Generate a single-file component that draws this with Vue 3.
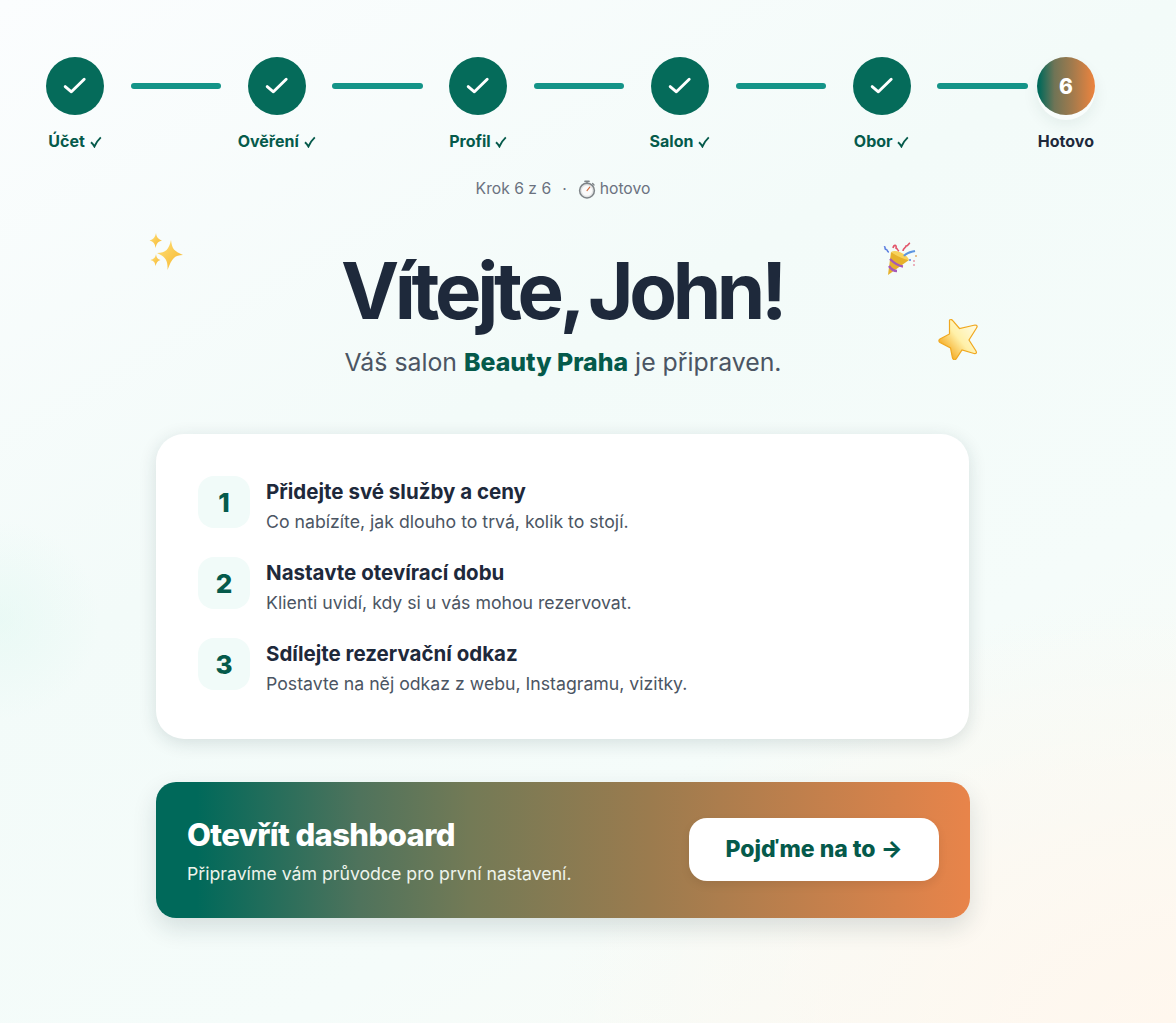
<script setup>
const steps = [
  { label: 'Účet' },
  { label: 'Ověření' },
  { label: 'Profil' },
  { label: 'Salon' },
  { label: 'Obor' },
]
const items = [
  { n: 1, title: 'Přidejte své služby a ceny', text: 'Co nabízíte, jak dlouho to trvá, kolik to stojí.' },
  { n: 2, title: 'Nastavte otevírací dobu', text: 'Klienti uvidí, kdy si u vás mohou rezervovat.' },
  { n: 3, title: 'Sdílejte rezervační odkaz', text: 'Postavte na něj odkaz z webu, Instagramu, vizitky.' },
]
</script>

<template>
  <div class="page">
    <div class="stepper">
      <template v-for="s in steps" :key="s.label">
        <div class="step">
          <div class="circle done">
            <svg width="24" height="24" viewBox="0 0 24 24" fill="none">
              <path d="M2.2 12.6 L8.4 17.8 L21.2 5.2" stroke="#fff" stroke-width="2.9" stroke-linecap="round" stroke-linejoin="round" />
            </svg>
          </div>
          <div class="label">
            {{ s.label }}
            <svg class="tick" width="12" height="12" viewBox="0 0 12 12" fill="none">
              <path d="M1 6.300 C2.400 7.600 3.500 9 4.400 10.500 C6 7 8 4 10.800 1.400" stroke="#055a4b" stroke-width="1.900" />
            </svg>
          </div>
        </div>
        <div class="line"></div>
      </template>
      <div class="step last">
        <div class="circle current">6</div>
        <div class="label dark">Hotovo</div>
      </div>
    </div>

    <div class="meta">
      <span>Krok 6 z 6</span>
      <span class="dot">·</span>
      <span class="meta-time">
        <svg class="watch" width="18" height="19" viewBox="0 0 18 19" fill="none">
          <circle cx="9" cy="10.6" r="7.4" fill="#e4e6e6" stroke="#7f8589" stroke-width="1.5" />
          <circle cx="9" cy="10.6" r="5.2" fill="#fbfbfb" />
          <path d="M7 1.4h4" stroke="#7f8589" stroke-width="1.6" stroke-linecap="round" />
          <path d="M9 2v1.6M14.6 3.6l1.4 1.4" stroke="#7f8589" stroke-width="1.4" stroke-linecap="round" />
          <path d="M9 10.6 L11.8 7.2" stroke="#d46a3a" stroke-width="1.1" stroke-linecap="round" />
        </svg>
        hotovo
      </span>
    </div>

    <section class="hero">
      <svg class="float sparkles" width="38" height="40" viewBox="0 0 38 40">
        <defs>
          <linearGradient id="sp" x1="0" y1="0" x2="1" y2="1">
            <stop offset="0" stop-color="#ffe27a" />
            <stop offset="1" stop-color="#f6b42c" />
          </linearGradient>
        </defs>
        <path d="M23 7 C24 16 26 18 35 22 C27 22 24 25 19.500 37 C20 28 18 24 9 20 C18 20 21 16 23 7Z" fill="url(#sp)" />
        <path d="M8 0 C8.600 4 10 6 14 7.500 C10 8.500 8.800 10 7.500 15 C7 10.500 5.500 8.500 1.500 7.500 C5.500 6.500 7 4.500 8 0Z" fill="url(#sp)" />
        <path d="M8 21 C8.400 24.500 9.500 26 12.500 27 C9.500 28 8.500 29.500 7.500 33 C7 29.500 6 28 2.500 27 C6 26 7.400 24.500 8 21Z" fill="url(#sp)" />
      </svg>

      <svg class="float popper" width="36" height="36" viewBox="0 0 36 36" fill="none">
        <path d="M5 33 L8 10 L26 18 Z" fill="#e6b12c" />
        <path d="M8 10 C13 7 24 12 26 18 C20 17 13 14 8 10Z" fill="#f7d25c" />
        <path d="M7 17 C11 21 15 24 20 24.500 M6 24 C8 27 11 29 14 29" stroke="#a65ab8" stroke-width="2.400" />
        <path d="M1 5 C3 4 1 8 3.500 7.500 C5 9 4.500 10 6 10" stroke="#5c7fe0" stroke-width="1.600" />
        <path d="M10 6 C11 2 14 3 13 6 C15 7 14 8 16 9" stroke="#e2556a" stroke-width="1.600" />
        <path d="M20 9 C20 6 23 6 23 4 C25 4 25 2 27 1" stroke="#e2556a" stroke-width="1.600" />
        <path d="M21 14 C24 10 28 10 32 9" stroke="#5c95e0" stroke-width="2" />
        <circle cx="31" cy="19" r="1" fill="#e99aa8" />
        <circle cx="33" cy="14" r="1" fill="#e0b070" />
        <circle cx="27" cy="18" r="1" fill="#5c7fe0" />
        <circle cx="31" cy="23" r="1" fill="#e99aa8" />
      </svg>

      <svg class="float star" width="42" height="42" viewBox="0 0 42 42">
        <defs>
          <linearGradient id="st" x1="0.900" y1="0.100" x2="0.100" y2="0.800">
            <stop offset="0" stop-color="#fffbe0" />
            <stop offset="0.500" stop-color="#fff0a8" />
            <stop offset="1" stop-color="#f3a416" />
          </linearGradient>
        </defs>
        <path d="M11.500 2 C13 1 14 1.500 15 3 L21.500 10.500 L37 7 C39.500 7 39.500 8.500 38.500 10 L31 22 L38 33 C39 35 38 36 36 35.500 L24 32 L18 41 C16.500 42.500 15 41.500 14.500 40 L12.500 30 L2 24.500 C0.500 23.500 0.500 22 2 21 L11.500 16 Z" fill="url(#st)" stroke="#f0a820" stroke-width="1.200" />
      </svg>

      <h1>Vítejte, John!</h1>
      <p class="sub">Váš salon <strong>Beauty Praha</strong> je připraven.</p>
    </section>

    <section class="card">
      <div v-for="i in items" :key="i.n" class="item">
        <div class="num">{{ i.n }}</div>
        <div class="copy">
          <div class="title">{{ i.title }}</div>
          <div class="text">{{ i.text }}</div>
        </div>
      </div>
    </section>

    <section class="cta">
      <div class="cta-copy">
        <div class="cta-title">Otevřít dashboard</div>
        <div class="cta-text">Připravíme vám průvodce pro první nastavení.</div>
      </div>
      <button class="cta-btn" type="button">Pojďme na to →</button>
    </section>
  </div>
</template>

<style>
html, body { margin: 0; padding: 0; }
</style>

<style scoped>
.page {
  width: 1176px;
  height: 1023px;
  box-sizing: border-box;
  padding: 57px 50px 0 0;
  overflow: hidden;
  font-family: Inter, "Noto Sans", sans-serif;
  background:
    radial-gradient(circle at 0px 620px, rgba(224, 248, 241, 0.5) 0, rgba(240, 251, 248, 0) 100px),
    radial-gradient(ellipse 620px 420px at 100% 100%, #fff7ee 0, rgba(255, 247, 238, 0) 100%),
    linear-gradient(150deg, #fbfdfe 0%, #f3fbf9 40%, #f5fcfa 70%, #fbfaf4 100%);
}
.stepper {
  display: flex;
  align-items: flex-start;
  padding-left: 46px;
}
.step {
  width: 58px;
  flex: none;
  display: flex;
  flex-direction: column;
  align-items: center;
}
.step.last { margin-left: -17.3px; }
.circle {
  width: 58px;
  height: 58px;
  border-radius: 50%;
  display: flex;
  align-items: center;
  justify-content: center;
}
.circle.done { background: #056b5a; }
.circle.current {
  background: linear-gradient(90deg, #00695a 3%, #6f7456 30%, #a07a4d 60%, #e8833f 97%);
  color: #fff;
  font-size: 21px;
  font-weight: 800;
  box-shadow: 0 5px 0 0 #f9fdfc, 0 9px 16px rgba(20, 60, 50, 0.08);
}
.line {
  flex: none;
  width: 90.4px;
  height: 6px;
  margin: 26px 26.625px 0;
  border-radius: 3px;
  background: #149488;
}
.label {
  margin-top: 16px;
  white-space: nowrap;
  font-size: 16px;
  line-height: 20px;
  font-weight: 700;
  color: #055a4b;
}
.tick {
  vertical-align: -1px;
  margin-left: 1px;
}
.label.dark { color: #1e293b; }
.meta {
  margin-top: 28px;
  display: flex;
  justify-content: center;
  align-items: center;
  font-size: 15.7px;
  line-height: 20px;
  color: #6b7280;
}
.dot { margin: 0 11px; }
.meta-time { display: inline-flex; align-items: center; gap: 4px; }
.hero {
  position: relative;
  width: 814px;
  margin: 0 auto;
  text-align: center;
  padding-top: 48px;
}
.float { position: absolute; }
.sparkles { left: -8px; top: 34px; }
.popper { left: 727px; top: 43px; }
.star { left: 782px; top: 119px; }
h1 {
  margin: 0;
  font-size: 78px;
  line-height: 88px;
  font-weight: 750;
  letter-spacing: -4.35px;
  word-spacing: -5px;
  color: #1e293b;
  transform: translateX(-1px);
}
.sub {
  margin: 11px 0 0;
  font-size: 24.85px;
  line-height: 33px;
  color: #4b5563;
}
.sub strong { color: #055a4b; font-weight: 800; }
.card {
  width: 813px;
  box-sizing: border-box;
  margin: 55px 0 0 156px;
  height: 305px;
  padding: 42px;
  background: #fff;
  border-radius: 28px;
  box-shadow: 0 4px 18px rgba(20, 50, 60, 0.14);
  display: flex;
  flex-direction: column;
  gap: 29px;
}
.item { display: flex; gap: 16px; align-items: flex-start; height: 52px; }
.num {
  flex: none;
  width: 52px;
  height: 52px;
  border-radius: 16px;
  background: #f1fbf9;
  color: #055a4b;
  font-size: 26px;
  font-weight: 800;
  display: flex;
  align-items: center;
  justify-content: center;
}
.title {
  font-size: 20.5px;
  line-height: 28px;
  font-weight: 700;
  color: #1e293b;
  padding-top: 2px;
}
.text {
  font-size: 17.7px;
  line-height: 26px;
  margin-top: 3px;
  color: #4b5563;
}
.cta {
  width: 814px;
  height: 136px;
  box-sizing: border-box;
  margin: 43px auto 0;
  padding: 0 31px;
  border-radius: 20px;
  display: flex;
  align-items: center;
  justify-content: space-between;
  color: #fff;
  background: linear-gradient(90deg, #00695a 5%, #4f735c 25%, #737a56 38.5%, #9b7b4e 60.7%, #e8844a 100%);
  box-shadow: 0 10px 24px rgba(20, 50, 60, 0.14);
}
.cta-copy { padding-top: 2px; }
.cta-title {
  font-size: 31px;
  line-height: 38px;
  font-weight: 850;
  letter-spacing: -0.6px;
}
.cta-text {
  margin-top: 8px;
  font-size: 17.7px;
  line-height: 24px;
  color: #eef4ec;
}
.cta-btn {
  width: 250px;
  height: 63px;
  margin-bottom: 1px;
  border: 0;
  border-radius: 18px;
  background: #fff;
  color: #055a4b;
  font: 800 23px/1 Inter, "Noto Sans", sans-serif;
  box-shadow: 0 4px 10px rgba(0, 0, 0, 0.08);
}
</style>
